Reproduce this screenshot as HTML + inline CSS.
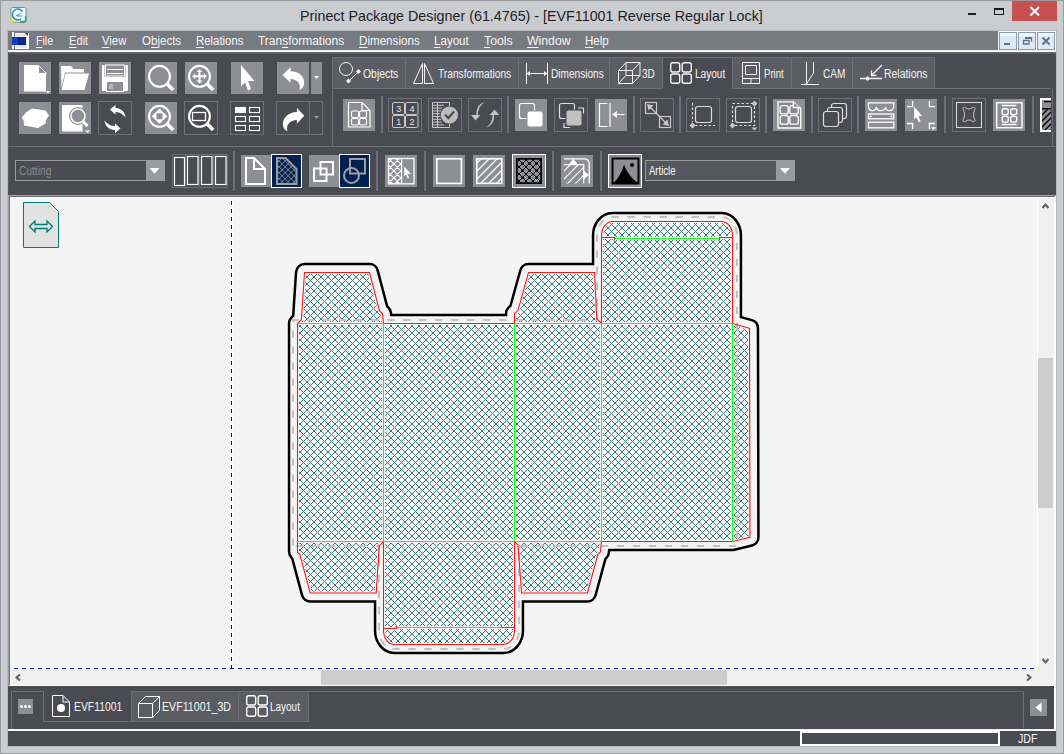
<!DOCTYPE html>
<html><head><meta charset="utf-8">
<style>
*{margin:0;padding:0;box-sizing:border-box}
html,body{width:1064px;height:754px;overflow:hidden;background:#cbccd0;font-family:"Liberation Sans",sans-serif}
.a{position:absolute}
.t{position:absolute;white-space:nowrap;font-size:12px;line-height:14px;color:#f6f6f6}
.u{text-decoration:underline;text-underline-offset:2px}
</style></head><body>
<svg class="a" style="left:0;top:0" width="1064" height="754" viewBox="0 0 1064 754">
<rect x="0" y="0" width="1064" height="754" fill="#cbccd0"/>
<rect x="0.5" y="0.5" width="1063" height="753" fill="none" stroke="#9a9ba0"/>
<rect x="7" y="30" width="1050" height="717" fill="#b8b9bd"/>
<!-- menubar -->
<rect x="8" y="31" width="1048" height="19" fill="#787a82"/>
<rect x="8" y="50" width="1048" height="2" fill="#f4f4f4"/>
<rect x="8" y="52" width="1048" height="143" fill="#4a4a52"/>
<rect x="8" y="52" width="1048" height="1.5" fill="#6a6a6c"/>
<rect x="8" y="52" width="1" height="143" fill="#5a5a5c"/>
<!-- canvas widget borders -->
<rect x="8" y="195" width="1048" height="491" fill="#a3a3a3"/>
<rect x="9" y="196" width="1047" height="490" fill="#ffffff"/>
<rect x="9" y="196" width="1046" height="489" fill="#696969"/>
<rect x="10" y="197" width="1045" height="488" fill="#ffffff"/>
<rect x="11" y="198" width="1026" height="472" fill="#f4f4f4"/>
<rect x="1038" y="198" width="16" height="487" fill="#f0f0f0"/>
<rect x="11" y="670" width="1043" height="15" fill="#f0f0f0"/>
<rect x="1038" y="358" width="15" height="150" fill="#cdcdcd"/>
<rect x="321" y="670" width="406" height="15" fill="#cdcdcd"/>
<g fill="none" stroke="#606060" stroke-width="2">
<path d="M1042.5 208 L1045.5 204.5 L1048.5 208"/>
<path d="M1042.5 659 L1045.5 662.5 L1048.5 659"/>
<path d="M20 674.5 L16.5 677.5 L20 680.5"/>
<path d="M1027 674.5 L1030.5 677.5 L1027 680.5"/>
</g>
<!-- bottom panel -->
<rect x="8" y="686" width="1048" height="43" fill="#4a4a52"/>
<rect x="8" y="729" width="1048" height="2" fill="#f4f4f4"/>
<rect x="8" y="731" width="1048" height="15" fill="#4a4a52"/>
<path d="M11.5 729 V691.5 H43.5 V721.5 H131.5 M308.5 691.5 H1023.5 V728.5" fill="none" stroke="#6e6e76"/>
<rect x="1054" y="686" width="2" height="45" fill="#fff"/>
<rect x="131.5" y="691.5" width="107" height="30" fill="#5c5c64" stroke="#6e6e76"/>
<rect x="238.5" y="691.5" width="70" height="30" fill="#5c5c64" stroke="#6e6e76"/>
<rect x="18" y="699" width="15" height="15" fill="#8e8f95"/>
<circle cx="21.5" cy="706.5" r="1.5" fill="#fff"/><circle cx="25.5" cy="706.5" r="1.5" fill="#fff"/><circle cx="29.5" cy="706.5" r="1.5" fill="#fff"/>
<path d="M52.5 695.5 H63 L69.5 702 V716.5 H52.5 Z M63 695.5 V702 H69.5" fill="none" stroke="#fff" stroke-width="1"/>
<circle cx="61" cy="708" r="4" fill="#fff"/>
<g fill="none" stroke="#fff" stroke-width="1">
<path d="M138.5 703.5 H152.5 V717.5 H138.5 Z M138.5 703.5 L145.5 696.5 H159.5 V710.5 L152.5 717.5 M152.5 703.5 L159.5 696.5"/>
<g stroke-width="1.4"><rect x="246.7" y="695.7" width="9" height="9.3" rx="2"/><rect x="258.2" y="695.7" width="9.1" height="9.3" rx="2"/>
<rect x="246.7" y="707" width="9" height="9.2" rx="2"/><rect x="258.2" y="707" width="9.1" height="9.2" rx="2"/></g>
</g>
<rect x="1030" y="699" width="17" height="17" fill="#8e8f95"/>
<path d="M1041.5 702.5 V712.5 L1035.5 707.5 Z" fill="#fff"/>
<!-- status -->
<rect x="801" y="732" width="198" height="13" fill="#4a4a52" stroke="#fff" stroke-width="2"/>
</svg>
<svg class="a" style="left:0;top:0" width="1064" height="754" viewBox="0 0 1064 754">
<!-- title bar icons -->
<rect x="11" y="7.5" width="15" height="15" rx="1.5" fill="#ffffff" stroke="#5a8fb8" stroke-width="1"/>
<path d="M11.5 14 V21.5 H19" stroke="#f0e030" stroke-width="2" fill="none"/>
<path d="M20 21.5 H25.5 V16" stroke="#30b040" stroke-width="1.5" fill="none"/>
<path d="M22.5 11.5 A5.5 5.5 0 1 0 21 19" stroke="#1e90e0" stroke-width="1.6" fill="none"/>
<path d="M16 16 L21 13 M17 16 H22.5" stroke="#1e90e0" stroke-width="1" fill="none"/>
<rect x="968" y="13" width="8" height="2" fill="#1a1a1a"/>
<rect x="994.5" y="8.5" width="9" height="6" fill="none" stroke="#1a1a1a" stroke-width="1"/>
<rect x="994" y="8" width="10" height="2" fill="#1a1a1a"/>
<rect x="1012" y="1" width="45" height="20" fill="#c75050"/>
<path d="M1030.5 7 L1039 15.5 M1039 7 L1030.5 15.5" stroke="#ffffff" stroke-width="2"/>
<!-- menu icon -->
<rect x="12" y="32" width="2" height="17" fill="#f0f0f0"/>
<rect x="15.5" y="33.5" width="12" height="15" fill="#e8e8e8" stroke="#ffffff" stroke-width="1"/>
<rect x="12" y="37" width="14" height="8" fill="#0a2a90"/>
<rect x="12" y="37" width="6" height="8" fill="#1040c0"/>
<path d="M25 33 L29 37 V33 Z" fill="#303030"/>
<rect x="28" y="33" width="1" height="16" fill="#ffffff"/>
<!-- MDI buttons -->
<rect x="998" y="31" width="58" height="19" fill="#fafafa"/>
<g fill="#dde9f6" stroke="#8a9bb0" stroke-width="1">
<rect x="999.5" y="32.5" width="17" height="17"/>
<rect x="1018.5" y="32.5" width="17" height="17"/>
<rect x="1037.5" y="32.5" width="17" height="17"/>
</g>
<g fill="#eef5fc"><rect x="1000" y="33" width="16" height="3"/><rect x="1019" y="33" width="16" height="3"/><rect x="1038" y="33" width="16" height="3"/></g>
<rect x="1004" y="43" width="6" height="2" fill="#637282"/>
<path d="M1023.5 40.5 h5.5 v3.5 h-5.5 z" fill="none" stroke="#637282" stroke-width="1.3"/>
<path d="M1025.5 37.7 h6 v4" fill="none" stroke="#637282" stroke-width="1.3"/>
<rect x="1025" y="37" width="7" height="2" fill="#637282"/>
<path d="M1042.5 37.5 L1049.5 44.5 M1049.5 37.5 L1042.5 44.5" stroke="#637282" stroke-width="2"/>
</svg>
<svg class="a" style="left:0;top:0" width="1064" height="754" viewBox="0 0 1064 754">
<g fill="#8e8f95">
<rect x="19" y="62" width="32" height="32"/><rect x="59" y="62" width="32" height="32"/><rect x="99" y="62" width="32" height="32"/>
<rect x="145" y="62" width="32" height="32"/><rect x="185" y="62" width="32" height="32"/><rect x="231" y="62" width="32" height="32"/>
<rect x="277" y="62" width="32" height="32"/><rect x="311" y="62" width="11" height="32"/>
<rect x="19" y="102" width="32" height="32"/><rect x="59" y="102" width="32" height="32"/><rect x="145" y="102" width="32" height="32"/>
</g>
<g fill="none" stroke="#6f7077" stroke-width="1">
<rect x="98.5" y="101.5" width="33" height="33"/><rect x="184.5" y="101.5" width="33" height="33"/><rect x="230.5" y="101.5" width="33" height="33"/>
<rect x="276.5" y="101.5" width="33" height="33"/><rect x="309.5" y="101.5" width="13" height="33"/>
</g>
<!-- new doc -->
<path d="M24 65 H38 V73 H46 V91.5 H24 Z" fill="#fff"/>
<path d="M38.5 65.5 V73.5 H46.5 Z" fill="#8e8f95" stroke="#fff" stroke-width="1"/>
<path d="M45.5 91 H50.5 L48 93.5 Z" fill="#fff"/>
<!-- open folder -->
<path d="M61 66 H71 L73.5 69 H84 V72.5 H65 L61.5 88 Z" fill="#fff"/>
<path d="M65.5 73.5 H89 L84.5 90 H61.5 Z" fill="#fff"/>
<!-- save -->
<path d="M102 66 Q102 65 103 65 H127 Q128 65 128 66 V90 Q128 91 127 91 H103 Q102 91 102 90 Z" fill="#fff"/>
<rect x="104.5" y="65" width="21" height="12" fill="#8e8f95"/>
<rect x="105.5" y="65" width="19" height="11" fill="none" stroke="#fff" stroke-width="1"/>
<path d="M107 69.5 H123 M107 73.5 H123" stroke="#fff" stroke-width="1"/>
<rect x="106.5" y="81.5" width="17" height="10" fill="#8e8f95" stroke="#fff" stroke-width="1"/>
<rect x="109" y="84" width="4" height="5" fill="#fff" opacity="0.35"/>
<!-- zoom -->
<g fill="none" stroke="#fff">
<circle cx="159.5" cy="76.3" r="10.4" stroke-width="2.1"/>
<path d="M166.8 83.6 L173.2 90" stroke-width="3.6"/>
<circle cx="199.5" cy="76.3" r="10.4" stroke-width="2.1"/>
<path d="M206.8 83.6 L213.2 90" stroke-width="3.6"/>
</g>
<path d="M199.5 69 L202.5 72 H200.5 V75.3 H203.8 V73.3 L206.8 76.3 L203.8 79.3 V77.3 H200.5 V80.6 H202.5 L199.5 83.6 L196.5 80.6 H198.5 V77.3 H195.2 V79.3 L192.2 76.3 L195.2 73.3 V75.3 H198.5 V72 H196.5 Z" fill="#fff"/>
<!-- arrow cursor -->
<path d="M241 65 L254.5 81 L248 81 L251 89 L248 90.5 L245 82.5 L241 86.5 Z" fill="#fff"/>
<!-- undo -->
<path d="M282.6 75 L290.6 67 V71.3 C299.5 71.3 305.5 77.5 304 84.5 C303.3 87.5 301.5 89.3 299.5 90 C301.3 84 297.5 79 290.6 79 V83 Z" fill="#fff"/>
<path d="M314 76 H319 L316.5 79 Z" fill="#fff"/>
<!-- row2: box -->
<path d="M21.5 118 L26.5 112 L32 108.5 L45.5 110.5 L49 115.5 L46 120 L45.5 123.5 L38 128 L24 125.5 L23.5 120 Z" fill="#fff"/>
<!-- doc+magnifier -->
<path d="M62 105 H82.5 V131.5 H62 Z" fill="#fff"/>
<circle cx="78" cy="116" r="9" fill="#8e8f95"/>
<circle cx="78" cy="116" r="7" fill="#8e8f95" stroke="#fff" stroke-width="1.5"/>
<path d="M83 121.5 L87.5 126" stroke="#fff" stroke-width="3"/>
<path d="M85 130.5 H90 L87.5 133 Z" fill="#fff"/>
<!-- rotate arrows -->
<path d="M110 109.5 L115.5 105 V108 C121 108 125 112 125.5 117.5 C123 114 119.5 112 115.5 112 V114.5 Z" fill="#fff"/>
<path d="M120.5 128.5 L115 133 V130 C109 130 105 126 104.5 120.5 C107 124 110.5 126 115 126 V123.5 Z" fill="#fff"/>
<!-- zoom fit -->
<g fill="none" stroke="#fff">
<circle cx="159.5" cy="116.3" r="10.4" stroke-width="2.1"/>
<path d="M166.8 123.6 L173.2 130" stroke-width="3.6"/>
<circle cx="199.5" cy="116.3" r="10.4" stroke-width="2.1"/>
<path d="M206.8 123.6 L213.2 130" stroke-width="3.6"/>
<rect x="192.5" y="112.5" width="13" height="8" stroke-width="1.3"/>
</g>
<path d="M159.5 108.5 L167.3 116.3 L159.5 124.1 L151.7 116.3 Z" fill="#fff"/>
<rect x="156.5" y="113.3" width="6" height="6" fill="#8e8f95"/>
<!-- grid -->
<g fill="none" stroke="#fff" stroke-width="1.1">
<rect x="235.5" y="107.5" width="10" height="5" fill="#fff"/><rect x="249.5" y="107.5" width="10" height="5"/>
<rect x="235.5" y="116.5" width="10" height="5"/><rect x="249.5" y="116.5" width="10" height="5"/>
<rect x="235.5" y="125.5" width="10" height="5"/><rect x="249.5" y="125.5" width="10" height="5"/>
</g>
<!-- redo -->
<path d="M304.3 115.8 L296.9 107.8 V112 C288 112 282 118.5 283 125.5 C283.5 128.5 285.3 130.5 287.5 131.2 C285.7 125.5 289.5 120 296.9 120 V123.5 Z" fill="#fff"/>
<path d="M314 116 H319 L316.5 119 Z" fill="#9a9aa0"/>
</svg>
<svg class="a" style="left:0;top:0" width="1064" height="754" viewBox="0 0 1064 754">
<!-- tab strip -->
<g stroke="#6e6e76" stroke-width="1">
<rect x="332.5" y="57.5" width="73" height="31" fill="#5c5c64"/>
<rect x="405.5" y="57.5" width="113" height="31" fill="#5c5c64"/>
<rect x="518.5" y="57.5" width="91" height="31" fill="#5c5c64"/>
<rect x="609.5" y="57.5" width="53" height="31" fill="#5c5c64"/>
<rect x="732.5" y="57.5" width="59" height="31" fill="#5c5c64"/>
<rect x="791.5" y="57.5" width="61" height="31" fill="#5c5c64"/>
<rect x="852.5" y="57.5" width="82" height="31" fill="#5c5c64"/>
<path d="M662.5 88.5 V57.5 H732.5 V88.5" fill="#4a4a52"/>
<path d="M332.5 88.5 V146 M934.5 88.5 H1052.5 V146" fill="none"/>
</g>
<path d="M8 146.5 H1056" stroke="#6e6e76" stroke-width="1"/>
<!-- tab icons -->
<g fill="none" stroke="#f4f4f4" stroke-width="1">
<circle cx="346" cy="69" r="6.5"/>
<path d="M349 81 L358.5 71.5"/>
<path d="M413.5 83.5 L422.5 63.5 V83.5 Z M424.5 63.5 V83.5 H433.5 Z"/>
<path d="M526.5 63 V84 M547.5 63 V84 M529 73.5 H545"/>
<path d="M618.5 70.5 H632.5 V83.5 H618.5 Z M618.5 70.5 L626 62.5 H640 V75.5 L632.5 83.5 M632.5 70.5 L640 62.5 M626 62.5 V75.5 H640 M618.5 83.5 L626 75.5"/>
<g stroke-width="1.4"><rect x="670.7" y="62.7" width="9" height="9.3" rx="2"/><rect x="682.2" y="62.7" width="9.1" height="9.3" rx="2"/>
<rect x="670.7" y="74" width="9" height="9.2" rx="2"/><rect x="682.2" y="74" width="9.1" height="9.2" rx="2"/></g>
<path d="M742.5 62.5 H759.5 V83.5 H742.5 Z M745.5 65.5 H756.5 V74.5 H745.5 Z M742.5 78.5 H759.5 M751 78.5 V83.5"/>
<path d="M806.5 62 V84 M813.5 62 V73 L806.5 84 M801 84.5 H819"/>
<path d="M860 78.5 H882 M882 65 L871.5 75.5 M871.5 70.5 V75.5 H876.5" stroke-width="1.3"/>
</g>
<path d="M526.5 73.5 L530 71 V76 Z M547.5 73.5 L544 71 V76 Z" fill="#f4f4f4"/>
<path d="M346 70 " />
<path d="M348.5 78.5 L351 81 L348.5 83.5 L346 81 Z M358.5 69 L361 71.5 L358.5 74 L356 71.5 Z M867.5 76 L870 78.5 L867.5 81 L865 78.5 Z" fill="#f4f4f4"/>
<!-- row 2 panel buttons -->
<g fill="#8e8f95">
<rect x="343" y="99" width="32" height="32"/><rect x="515" y="99" width="32" height="32"/><rect x="595" y="99" width="32" height="32"/>
<rect x="773" y="99" width="32" height="32"/><rect x="865" y="99" width="32" height="32"/><rect x="905" y="99" width="32" height="32"/>
<rect x="993" y="99" width="32" height="32"/>
</g>
<g fill="none" stroke="#6f7077" stroke-width="1">
<rect x="388.5" y="98.5" width="33" height="33"/><rect x="428.5" y="98.5" width="33" height="33"/><rect x="468.5" y="98.5" width="33" height="33"/>
<rect x="554.5" y="98.5" width="33" height="33"/><rect x="640.5" y="98.5" width="33" height="33"/><rect x="686.5" y="98.5" width="33" height="33"/>
<rect x="726.5" y="98.5" width="33" height="33"/><rect x="818.5" y="98.5" width="33" height="33"/><rect x="952.5" y="98.5" width="33" height="33"/>
</g>
<g fill="#6e6e78">
<rect x="381" y="96" width="2" height="37"/><rect x="507" y="96" width="2" height="37"/><rect x="633" y="96" width="2" height="37"/>
<rect x="679" y="96" width="2" height="37"/><rect x="765" y="96" width="2" height="37"/><rect x="811" y="96" width="2" height="37"/>
<rect x="857" y="96" width="2" height="37"/><rect x="944" y="96" width="2" height="37"/><rect x="1032" y="96" width="2" height="37"/>
</g>
<!-- icons row 2 panel -->
<g fill="none" stroke="#fff" stroke-width="1.2">
<path d="M348.5 102.5 H362 L370 110.5 V127 H348.5 Z M362 102.5 V110.5 H370"/>
<rect x="351.5" y="111" width="7" height="6.5" rx="1.5"/><rect x="359.5" y="111" width="7" height="6.5" rx="1.5"/>
<rect x="351.5" y="118.5" width="7" height="6.5" rx="1.5"/><rect x="359.5" y="118.5" width="7" height="6.5" rx="1.5"/>
</g>
<g fill="none" stroke="#c8c8c8" stroke-width="1">
<rect x="392.5" y="102.5" width="12" height="12" rx="1.5"/><rect x="405.5" y="102.5" width="12.5" height="12" rx="1.5"/>
<rect x="392.5" y="115.5" width="12" height="12" rx="1.5"/><rect x="405.5" y="115.5" width="12.5" height="12" rx="1.5"/>
<path d="M432.5 102.5 H449.5 V106 M432.5 102.5 V127.5 H449.5 V124 M432.5 105.3 H444 M432.5 108.1 H442 M432.5 110.9 H441 M432.5 113.7 H440.5 M432.5 116.5 H440.5 M432.5 119.3 H441 M432.5 122.1 H442 M432.5 124.9 H444 M437.5 102.5 V127.5"/>
</g>
<g font-family="Liberation Sans" font-size="9" fill="#e4e4e4" text-anchor="middle">
<text x="398.8" y="112">3</text><text x="412" y="112">4</text><text x="398.8" y="125">1</text><text x="412" y="125">2</text>
</g>
<circle cx="449.4" cy="115" r="8.6" fill="#bebebe"/>
<path d="M445 114.5 L448.3 118 L454 111.5" stroke="#4a4a52" stroke-width="2.2" fill="none"/>
<g fill="#c4c4c4">
<path d="M485 102.3 C479 103.5 476 108 476.5 115 H471 L475.7 120.5 L480.2 115 H477.8 C478 109 480.5 104.5 485 102.3 Z"/>
<path d="M485.5 127.5 C491.5 126.3 494.5 121.8 494 115 H499.3 L494.7 109.8 L489.5 115 H492.5 C492.5 121 490 125.5 485.5 127.5 Z"/>
</g>
<g fill="none" stroke="#fff" stroke-width="1.2">
<rect x="519.5" y="103.5" width="15" height="15" rx="2"/>
</g>
<rect x="527" y="111" width="16" height="16" rx="2.5" fill="#fff" stroke="#8e8f95" stroke-width="1"/>
<g fill="none" stroke="#e0e0e0" stroke-width="1.2">
<rect x="559.5" y="103.5" width="15" height="15" rx="2"/>
<path d="M578 108 H583.5 V113.5 M564 123 V127.5 H570"/>
</g>
<rect x="566" y="110" width="16" height="16" rx="2.5" fill="#c0c0c0" stroke="#4a4a52" stroke-width="1"/>
<g fill="none" stroke="#fff" stroke-width="1.2">
<path d="M607.5 103.5 H599.5 V126.5 H607.5 M610 103 V127 M624.5 114.5 H615"/>
</g>
<path d="M612 114.5 L617 111 V118 Z" fill="#fff"/>
<g fill="none" stroke="#c8c8c8" stroke-width="1.2">
<rect x="645.5" y="102.5" width="11" height="11"/><rect x="659.5" y="116.5" width="11" height="11"/>
<path d="M648.5 105.5 L667.5 124.5"/>
</g>
<path d="M647 104 L653.5 105.5 L648.5 110.5 Z M669 126 L662.5 124.5 L667.5 119.5 Z" fill="#c8c8c8"/>
<g fill="none" stroke="#dcdcdc" stroke-width="1.2">
<rect x="695.5" y="106.5" width="16" height="16" rx="2.5"/>
<rect x="735.5" y="106.5" width="16" height="16" rx="2.5"/>
<path d="M692.5 103 V122 M695 125.5 H715" stroke-dasharray="2.5 2"/>
<path d="M732.5 106 V122 M735 125.5 H754.5 V106 M732.5 103.5 H752" stroke-dasharray="2.5 2"/>
</g>
<path d="M692.5 122.5 L695.5 125.5 L692.5 128.5 L689.5 125.5 Z M732.5 122.5 L735.5 125.5 L732.5 128.5 L729.5 125.5 Z M754.5 100.5 L757.5 103.5 L754.5 106.5 L751.5 103.5 Z" fill="#c8c8c8"/>
<path d="M751.5 127.5 H757.5 L754.5 130.5 Z" fill="#c8c8c8"/>
<path d="M778 101.8 H793.4 L800.7 108.6 V128 H778 Z" fill="#88898f" stroke="#fff" stroke-width="1.3"/>
<path d="M793.4 101.8 V108 H800.7" fill="none" stroke="#fff" stroke-width="1.3"/>
<g fill="#88898f" stroke="#fff" stroke-width="1.3">
<rect x="780.2" y="105.6" width="8" height="8.3" rx="2"/><rect x="789.8" y="105.6" width="8.5" height="8.3" rx="2"/>
<rect x="780.2" y="115.6" width="8" height="8.6" rx="2"/><rect x="789.8" y="115.6" width="8.5" height="8.6" rx="2"/>
</g>
<path d="M793.4 102.5 V107.5 H800" fill="#8e8f95" stroke="#fff" stroke-width="1.3"/>
<g fill="#4a4a52" stroke="#dcdcdc" stroke-width="1.2">
<rect x="831.5" y="103.5" width="15" height="15" rx="2.5"/>
<rect x="827.5" y="107.5" width="15" height="15" rx="2.5"/>
<rect x="823.5" y="111.5" width="15" height="15" rx="2.5"/>
</g>
<g fill="none" stroke="#fff" stroke-width="1.3">
<path d="M868.5 102.8 H893.8 V106 C893.8 109 891.5 110.7 889.3 110.7 C887.2 110.7 885.8 109.2 885.6 107.2 C885 109.6 883 110.7 881 110.7 C879 110.7 877 109.6 876.3 107.2 C876 109.2 874.6 110.7 872.5 110.7 C870.2 110.7 868.5 109 868.5 106 Z"/>
<rect x="868.5" y="114" width="25.3" height="4.8"/>
<rect x="868.5" y="122.2" width="25.3" height="5.6"/>
<path d="M907 106.6 H912.6 V101 M929.4 101 V106.6 H935 M907 123.5 H912.6 V129 M935 123.5 H929.4 V129"/>
</g>
<circle cx="870.8" cy="116.4" r="0.9" fill="#fff"/><circle cx="891.5" cy="116.4" r="0.9" fill="#fff"/>
<path d="M914.2 106.6 L922 116 L918.3 116.2 L920.6 121.3 L918.8 122.2 L916.6 117.2 L914.2 119.3 Z" fill="#fff"/>
<path d="M930.9 127.2 H936 L933.4 130.2 Z" fill="#fff"/>
<rect x="956.5" y="102.5" width="25" height="25" fill="none" stroke="#d4d4d4" stroke-width="1.1"/>
<path d="M963.5 110 C962 107.5 964 106.5 966 108 C968 109.3 970 109.3 972 108 C974 106.5 976 107.5 974.5 110 C973.3 112 973.3 117 974.5 119 C976 121.5 974 122.5 972 121 C970 119.7 968 119.7 966 121 C964 122.5 962 121.5 963.5 119 C964.7 117 964.7 112 963.5 110 Z" fill="none" stroke="#c4c4c4" stroke-width="1"/>
<g fill="none" stroke="#fff" stroke-width="1.4">
<rect x="996.7" y="102.7" width="25.3" height="25"/>
<path d="M1002 105.5 H1016.5 M1002 124.5 H1016.5"/>
<rect x="1002.2" y="108.8" width="6" height="5.8" rx="1.8"/><rect x="1010.7" y="108.8" width="6" height="5.8" rx="1.8"/>
<rect x="1002.2" y="116.3" width="6" height="5.8" rx="1.8"/><rect x="1010.7" y="116.3" width="6" height="5.8" rx="1.8"/>
</g>
<rect x="1040" y="98" width="11" height="34" fill="#fff"/>
<rect x="1042" y="100" width="9" height="30" fill="#8e8f95"/>
<rect x="1044" y="101" width="7" height="1.3" fill="#000"/>
<rect x="1042" y="108" width="9" height="1.5" fill="#000"/>
<clipPath id="c5"><rect x="1042" y="109.5" width="11" height="20.5"/></clipPath>
<g clip-path="url(#c5)"><path d="M1040 117 L1050 107 M1040 123 L1054 109 M1040 129 L1056 113 M1044 131 L1056 119 M1050 131 L1056 125" stroke="#000" stroke-width="1.3"/></g>
<rect x="1051" y="88" width="5" height="58" fill="#4a4a52"/>
<path d="M1052.5 88.5 V146" stroke="#6e6e76"/>
</svg>
<svg class="a" style="left:0;top:0" width="1064" height="754" viewBox="0 0 1064 754">
<defs>
<pattern id="xh" patternUnits="userSpaceOnUse" width="4.2" height="4.2" patternTransform="rotate(45)">
<rect width="4.2" height="4.2" fill="none"/><path d="M0 0 V4.2 M0 0 H4.2" stroke="#9c9ca0" stroke-width="1.2"/>
</pattern>
<pattern id="xb" patternUnits="userSpaceOnUse" width="5" height="5" patternTransform="rotate(45)">
<path d="M0 0 V5 M0 0 H5" stroke="#000" stroke-width="1.6"/>
</pattern>
<pattern id="hs" patternUnits="userSpaceOnUse" width="5" height="5" patternTransform="rotate(-45)">
<path d="M0 0 H5" stroke="#fff" stroke-width="1.2"/>
</pattern>
</defs>
<!-- cutting combo -->
<rect x="15.5" y="160.5" width="149" height="20" fill="#4a4a52" stroke="#9a9ba0" stroke-width="1"/>
<rect x="146" y="160" width="19" height="21" fill="#9a9ba0"/>
<path d="M149.5 168 H159.5 L154.5 173.8 Z" fill="#fff"/>
<!-- 4 columns -->
<rect x="172.5" y="154.5" width="55" height="33" fill="none" stroke="#6e6f76" stroke-width="1"/>
<path d="M185.5 155 V187 M199.5 155 V187 M213.5 155 V187" stroke="#6e6f76" stroke-width="1"/>
<g fill="none" stroke="#fff" stroke-width="1.2">
<rect x="174.5" y="157.5" width="10" height="28"/><rect x="187.5" y="156.5" width="10.5" height="28"/>
<rect x="201.5" y="156.5" width="10.5" height="28"/><rect x="215.5" y="156.5" width="10.5" height="28"/>
</g>
<g fill="#6e6e78">
<rect x="233" y="151" width="2" height="40"/><rect x="376" y="151" width="2" height="40"/><rect x="424" y="151" width="2" height="40"/>
<rect x="552" y="151" width="2" height="40"/><rect x="600" y="151" width="2" height="40"/>
</g>
<g fill="#8e8f95">
<rect x="241" y="155" width="30" height="32"/><rect x="309" y="155" width="30" height="32"/><rect x="385" y="155" width="32" height="32"/>
<rect x="433" y="155" width="32" height="32"/><rect x="473" y="155" width="32" height="32"/><rect x="561" y="155" width="32" height="32"/>
</g>
<rect x="271.5" y="154.5" width="30" height="33" fill="#002050" stroke="#fff" stroke-width="1"/>
<rect x="339.5" y="154.5" width="30" height="33" fill="#002050" stroke="#fff" stroke-width="1"/>
<rect x="512.5" y="154.5" width="33" height="33" fill="#8e8f95" stroke="#fff" stroke-width="1"/>
<rect x="608.5" y="154.5" width="33" height="33" fill="#8e8f95" stroke="#fff" stroke-width="1"/>
<!-- page icons -->
<path d="M246 158 H254 L265 169 V184 H246 Z M254 158 V169 H265" fill="none" stroke="#fff" stroke-width="2"/>
<path d="M277 158 H285.5 L296.5 169 V184 H277 Z" fill="url(#xh)" stroke="#9c9ca0" stroke-width="2"/>
<g fill="none" stroke="#fff" stroke-width="2">
<rect x="314" y="168.5" width="12.5" height="12.5"/><rect x="320.5" y="162" width="12.5" height="12.5"/>
</g>
<g fill="none" stroke="#9c9ca0" stroke-width="2">
<rect x="350" y="159" width="15" height="14.5"/><circle cx="351.5" cy="175.5" r="7.5"/>
</g>
<!-- crosshatch select btn -->
<clipPath id="c4"><rect x="388.5" y="158.5" width="13" height="25"/></clipPath>
<g clip-path="url(#c4)" stroke="#fff" stroke-width="1.1" fill="none"><path d="M352 150 L392 190 M379.79999999999995 150 L339.79999999999995 190 M359 150 L399 190 M386.79999999999995 150 L346.79999999999995 190 M366 150 L406 190 M393.79999999999995 150 L353.79999999999995 190 M373 150 L413 190 M400.79999999999995 150 L360.79999999999995 190 M380 150 L420 190 M407.79999999999995 150 L367.79999999999995 190 M387 150 L427 190 M414.79999999999995 150 L374.79999999999995 190 M394 150 L434 190 M421.79999999999995 150 L381.79999999999995 190 M401 150 L441 190 M428.79999999999995 150 L388.79999999999995 190 M408 150 L448 190 M435.79999999999995 150 L395.79999999999995 190"/></g>
<circle cx="393.9" cy="163.9" r="1.2" fill="#fff"/><circle cx="393.9" cy="170.9" r="1.2" fill="#fff"/><circle cx="393.9" cy="177.9" r="1.2" fill="#fff"/>
<rect x="388.5" y="158.5" width="25.5" height="25.3" fill="none" stroke="#fff" stroke-width="1.3"/>
<path d="M401.6 158.5 V183.8" stroke="#fff" stroke-width="1.2"/>
<path d="M404.2 166.4 L410.9 173.7 L407.3 173.9 L409.2 177.7 L407.8 178.4 L405.9 174.6 L404.2 176.2 Z" fill="#fff"/>
<!-- fill style btns -->
<rect x="436.8" y="158.8" width="24.6" height="24.6" fill="none" stroke="#fff" stroke-width="1.6"/>
<clipPath id="c1"><rect x="477" y="159" width="25" height="24.5"/></clipPath>
<g clip-path="url(#c1)" stroke="#fff" stroke-width="1.3">
<path d="M470 170 L484 156 M470 178 L492 156 M472 184 L500 156 M479 185 L508 156 M487 185 L508 164 M495 185 L508 172"/>
</g>
<rect x="476.8" y="158.8" width="25" height="24.5" fill="none" stroke="#fff" stroke-width="1.6"/>
<rect x="516" y="158" width="26" height="26" fill="#000"/>
<rect x="517.5" y="159.5" width="23" height="23" fill="#8e8f95"/>
<clipPath id="c2"><rect x="517" y="159" width="24" height="24"/></clipPath>
<g clip-path="url(#c2)" stroke="#000" stroke-width="1" fill="none"><path d="M479 155 L514 190 M496 155 L461 190 M486 155 L521 190 M503 155 L468 190 M493 155 L528 190 M510 155 L475 190 M500 155 L535 190 M517 155 L482 190 M507 155 L542 190 M524 155 L489 190 M514 155 L549 190 M531 155 L496 190 M521 155 L556 190 M538 155 L503 190 M528 155 L563 190 M545 155 L510 190 M535 155 L570 190 M552 155 L517 190 M542 155 L577 190 M559 155 L524 190 M549 155 L584 190 M566 155 L531 190"/></g>
<g fill="#000"><circle cx="522.5" cy="163.5" r="1.2"/><circle cx="522.5" cy="170.5" r="1.2"/><circle cx="522.5" cy="177.5" r="1.2"/><circle cx="529.5" cy="163.5" r="1.2"/><circle cx="529.5" cy="170.5" r="1.2"/><circle cx="529.5" cy="177.5" r="1.2"/><circle cx="536.5" cy="163.5" r="1.2"/><circle cx="536.5" cy="170.5" r="1.2"/><circle cx="536.5" cy="177.5" r="1.2"/></g>
<rect x="516.7" y="158.7" width="24.6" height="24.6" fill="none" stroke="#000" stroke-width="1.4"/>
<!-- offset btn -->
<clipPath id="c3"><path d="M564 165 H583 V183.5 H564 Z"/></clipPath>
<g clip-path="url(#c3)" stroke="#fff" stroke-width="1.2">
<path d="M560 175 L572 163 M560 183 L580 163 M564 187 L588 163 M572 187 L590 169 M580 187 L590 177"/>
</g>
<path d="M564 158.8 H584 Q589.2 158.8 589.2 164 V183.6 M564 164.6 H583.7 V183.6" stroke="#fff" stroke-width="1.3" fill="none"/>
<path d="M573.3 159 L577.5 164 H569 Z M589 175 L584 171 V179 Z" fill="#fff"/>
<!-- image btn -->
<rect x="612.5" y="158.5" width="26" height="25" fill="#8e8f95" stroke="#000" stroke-width="2"/>
<path d="M613.5 183 C618 179 622 172 624 164.5 C626.5 172 632 179 638 183 Z" fill="#000"/>
<circle cx="632" cy="165" r="2" fill="#000"/>
<!-- article combo -->
<rect x="645.5" y="160.5" width="149" height="20" fill="#56565e" stroke="#9a9ba0" stroke-width="1"/>
<rect x="776" y="160" width="19" height="21" fill="#9a9ba0"/>
<path d="M780 168 H790 L785 173.8 Z" fill="#fff"/>
</svg>
<svg class="a" style="left:0;top:0" width="1064" height="754" viewBox="0 0 1064 754">
<defs>
<clipPath id="cv"><rect x="10" y="198" width="1027" height="472"/></clipPath>
<pattern id="ht" patternUnits="userSpaceOnUse" x="5" y="3" width="7" height="7">
<path d="M0 0h2v2h-2z M2 2h1v1h-1z M3 3h1v1h-1z M4 4h1v1h-1z M5 5h1v1h-1z M6 6h1v1h-1z M6 2h1v1h-1z M5 3h1v1h-1z M3 5h1v1h-1z M2 6h1v1h-1z" fill="#387c7c" shape-rendering="crispEdges"/>
</pattern>
</defs>
<g clip-path="url(#cv)">
<path d="M231.5 201 V668" stroke="#fff" stroke-width="3" stroke-dasharray="6 2" stroke-dashoffset="1"/>
<path d="M14 668.5 H1034" stroke="#fff" stroke-width="3" stroke-dasharray="6 2" stroke-dashoffset="1"/>
<path d="M231.5 201 V668" stroke="#0000ff" stroke-width="1" stroke-dasharray="4 4"/>
<path d="M14 668.5 H1034" stroke="#0000ff" stroke-width="1" stroke-dasharray="4 4"/>
<path d="M297.5 323.5 L301.4 319.7 L304.5 272.5 L369.5 272.5 L379.6 310.9 L382.5 313.5 L383.5 323.5 L514.5 323.5 L514.5 313.6 L518 310.3 L528.5 272.5 L594.5 272.5 L596.8 318.7 L601.5 323.5 L601.5 235.5 A11 14 0 0 1 612.5 221.5 L721.5 221.5 A11 14 0 0 1 732.5 235.5 L732.5 323.5 L749.5 328.3 L750 537.3 L732.5 541.5 L601.5 541.5 L600.5 551.7 L597.9 554.4 L587.4 593 L521.6 593 L518 545 L514.5 541.5 L514.5 630.5 A11 14 0 0 1 503.5 644.5 L394.5 644.5 A11 14 0 0 1 383.5 630.5 L383.5 541.5 L379.2 545.9 L376.2 593 L310.2 593 L299.9 554.5 L297.5 551.8 Z" fill="none" stroke="#000" stroke-width="19.4" stroke-linejoin="round"/>
<path d="M297.5 323.5 L301.4 319.7 L304.5 272.5 L369.5 272.5 L379.6 310.9 L382.5 313.5 L383.5 323.5 L514.5 323.5 L514.5 313.6 L518 310.3 L528.5 272.5 L594.5 272.5 L596.8 318.7 L601.5 323.5 L601.5 235.5 A11 14 0 0 1 612.5 221.5 L721.5 221.5 A11 14 0 0 1 732.5 235.5 L732.5 323.5 L749.5 328.3 L750 537.3 L732.5 541.5 L601.5 541.5 L600.5 551.7 L597.9 554.4 L587.4 593 L521.6 593 L518 545 L514.5 541.5 L514.5 630.5 A11 14 0 0 1 503.5 644.5 L394.5 644.5 A11 14 0 0 1 383.5 630.5 L383.5 541.5 L379.2 545.9 L376.2 593 L310.2 593 L299.9 554.5 L297.5 551.8 Z" fill="none" stroke="#f4f4f4" stroke-width="14.4" stroke-linejoin="round"/>
<path d="M297.5 323.5 L301.4 319.7 L304.5 272.5 L369.5 272.5 L379.6 310.9 L382.5 313.5 L383.5 323.5 L514.5 323.5 L514.5 313.6 L518 310.3 L528.5 272.5 L594.5 272.5 L596.8 318.7 L601.5 323.5 L601.5 235.5 A11 14 0 0 1 612.5 221.5 L721.5 221.5 A11 14 0 0 1 732.5 235.5 L732.5 323.5 L749.5 328.3 L750 537.3 L732.5 541.5 L601.5 541.5 L600.5 551.7 L597.9 554.4 L587.4 593 L521.6 593 L518 545 L514.5 541.5 L514.5 630.5 A11 14 0 0 1 503.5 644.5 L394.5 644.5 A11 14 0 0 1 383.5 630.5 L383.5 541.5 L379.2 545.9 L376.2 593 L310.2 593 L299.9 554.5 L297.5 551.8 Z" fill="#f4f4f4"/>
<path d="M297.5 323.5 L301.4 319.7 L304.5 272.5 L369.5 272.5 L379.6 310.9 L382.5 313.5 L383.5 323.5 L514.5 323.5 L514.5 313.6 L518 310.3 L528.5 272.5 L594.5 272.5 L596.8 318.7 L601.5 323.5 L601.5 235.5 A11 14 0 0 1 612.5 221.5 L721.5 221.5 A11 14 0 0 1 732.5 235.5 L732.5 323.5 L749.5 328.3 L750 537.3 L732.5 541.5 L601.5 541.5 L600.5 551.7 L597.9 554.4 L587.4 593 L521.6 593 L518 545 L514.5 541.5 L514.5 630.5 A11 14 0 0 1 503.5 644.5 L394.5 644.5 A11 14 0 0 1 383.5 630.5 L383.5 541.5 L379.2 545.9 L376.2 593 L310.2 593 L299.9 554.5 L297.5 551.8 Z" fill="url(#ht)"/>
<path d="M297.5 323.5 L301.4 319.7 L304.5 272.5 L369.5 272.5 L379.6 310.9 L382.5 313.5 L383.5 323.5 L514.5 323.5 L514.5 313.6 L518 310.3 L528.5 272.5 L594.5 272.5 L596.8 318.7 L601.5 323.5 L601.5 235.5 A11 14 0 0 1 612.5 221.5 L721.5 221.5 A11 14 0 0 1 732.5 235.5 L732.5 323.5 L749.5 328.3 L750 537.3 L732.5 541.5 L601.5 541.5 L600.5 551.7 L597.9 554.4 L587.4 593 L521.6 593 L518 545 L514.5 541.5 L514.5 630.5 A11 14 0 0 1 503.5 644.5 L394.5 644.5 A11 14 0 0 1 383.5 630.5 L383.5 541.5 L379.2 545.9 L376.2 593 L310.2 593 L299.9 554.5 L297.5 551.8 Z M297.5 323.5 H383.5 M514.5 323.5 H601.5 M601.5 323.5 H732.5 M383.5 323.5 V541.5 M514.5 323.5 V541.5 M601.5 323.5 V541.5 M732.5 323.5 V541.5 M297.5 541.5 H601.5 M614.5 238.5 H719.5 M396.5 627.5 H501.5 M601.5 237.5 H614.5 V240.5 M732.5 237.5 H719.5 V240.5 M383.5 628.5 H396.5 V625.5 M514.5 627.5 H501.5 V624.5" fill="none" stroke="#f8f8f8" stroke-width="3"/>
<path d="M293 546 V320 H597 V235.5 A15.5 18.5 0 0 1 612.5 217 H721.5 A15.5 18.5 0 0 1 737 235.5 V546 H519 V630.5 A15.5 18.5 0 0 1 503.5 649 H394.5 A15.5 18.5 0 0 1 379 630.5 V546 H293 Z" fill="none" stroke="#c2c2c2" stroke-width="2" stroke-dasharray="7.5 8.5"/>
<path d="M297.5 323.5 L301.4 319.7 L304.5 272.5 L369.5 272.5 L379.6 310.9 L382.5 313.5 L383.5 323.5 L514.5 323.5 L514.5 313.6 L518 310.3 L528.5 272.5 L594.5 272.5 L596.8 318.7 L601.5 323.5 L601.5 235.5 A11 14 0 0 1 612.5 221.5 L721.5 221.5 A11 14 0 0 1 732.5 235.5 L732.5 323.5 L749.5 328.3 L750 537.3 L732.5 541.5 L601.5 541.5 L600.5 551.7 L597.9 554.4 L587.4 593 L521.6 593 L518 545 L514.5 541.5 L514.5 630.5 A11 14 0 0 1 503.5 644.5 L394.5 644.5 A11 14 0 0 1 383.5 630.5 L383.5 541.5 L379.2 545.9 L376.2 593 L310.2 593 L299.9 554.5 L297.5 551.8 Z" fill="none" stroke="#ff1414" stroke-width="1.1"/>
<path d="M601.5 237.5 H614.5 V240.5 M732.5 237.5 H719.5 V240.5 M383.5 628.5 H396.5 V625.5 M514.5 627.5 H501.5 V624.5" fill="none" stroke="#ff1414" stroke-width="1.1"/>
<path d="M297.5 323.5 H383.5 M514.5 323.5 H601.5 M601.5 323.5 H732.5 M383.5 323.5 V541.5 M514.5 323.5 V541.5 M601.5 323.5 V541.5 M732.5 323.5 V541.5 M297.5 541.5 H601.5 M614.5 238.5 H719.5 M396.5 627.5 H501.5" fill="none" stroke="#10ff10" stroke-width="1.1"/>
</g>
<!-- doc icon -->
<path d="M23.5 202.5 H49.5 L58.5 211.5 V247.5 H23.5 Z" fill="#e2e2e2" stroke="#007a7a" stroke-width="1"/>
<path d="M29.5 226.5 L35 221 V224.5 H47 V221 L52.5 226.5 L47 232 V228.5 H35 V232 Z" fill="none" stroke="#007a7a" stroke-width="1.3"/>
</svg><div class="t" style="left:300.0px;top:6.60px;font-size:15px;line-height:18px;color:#1e1e1e;transform:scaleX(0.9527);transform-origin:0 0">Prinect Package Designer (61.4765) - [EVF11001 Reverse Regular Lock]</div>
<div class="t" style="left:36.3px;top:33.54px;font-size:12px;line-height:14px;color:#f6f6f6;transform:scaleX(0.8800);transform-origin:0 0"><span style="text-decoration:underline;text-underline-offset:1.5px;text-decoration-thickness:1px">F</span>ile</div>
<div class="t" style="left:68.5px;top:33.54px;font-size:12px;line-height:14px;color:#f6f6f6;transform:scaleX(0.9286);transform-origin:0 0"><span style="text-decoration:underline;text-underline-offset:1.5px;text-decoration-thickness:1px">E</span>dit</div>
<div class="t" style="left:102.3px;top:33.54px;font-size:12px;line-height:14px;color:#f6f6f6;transform:scaleX(0.9423);transform-origin:0 0"><span style="text-decoration:underline;text-underline-offset:1.5px;text-decoration-thickness:1px">V</span>iew</div>
<div class="t" style="left:141.8px;top:33.54px;font-size:12px;line-height:14px;color:#f6f6f6;transform:scaleX(0.9610);transform-origin:0 0">O<span style="text-decoration:underline;text-underline-offset:1.5px;text-decoration-thickness:1px">b</span>jects</div>
<div class="t" style="left:195.5px;top:33.54px;font-size:12px;line-height:14px;color:#f6f6f6;transform:scaleX(0.9480);transform-origin:0 0"><span style="text-decoration:underline;text-underline-offset:1.5px;text-decoration-thickness:1px">R</span>elations</div>
<div class="t" style="left:257.9px;top:33.54px;font-size:12px;line-height:14px;color:#f6f6f6;transform:scaleX(1.0000);transform-origin:0 0">Tran<span style="text-decoration:underline;text-underline-offset:1.5px;text-decoration-thickness:1px">s</span>formations</div>
<div class="t" style="left:358.6px;top:33.54px;font-size:12px;line-height:14px;color:#f6f6f6;transform:scaleX(0.9683);transform-origin:0 0"><span style="text-decoration:underline;text-underline-offset:1.5px;text-decoration-thickness:1px">D</span>imensions</div>
<div class="t" style="left:434.1px;top:33.54px;font-size:12px;line-height:14px;color:#f6f6f6;transform:scaleX(0.9649);transform-origin:0 0"><span style="text-decoration:underline;text-underline-offset:1.5px;text-decoration-thickness:1px">L</span>ayout</div>
<div class="t" style="left:484.3px;top:33.54px;font-size:12px;line-height:14px;color:#f6f6f6;transform:scaleX(1.0250);transform-origin:0 0"><span style="text-decoration:underline;text-underline-offset:1.5px;text-decoration-thickness:1px">T</span>ools</div>
<div class="t" style="left:527.1px;top:33.54px;font-size:12px;line-height:14px;color:#f6f6f6;transform:scaleX(1.0209);transform-origin:0 0"><span style="text-decoration:underline;text-underline-offset:1.5px;text-decoration-thickness:1px">W</span>indow</div>
<div class="t" style="left:585.4px;top:33.54px;font-size:12px;line-height:14px;color:#f6f6f6;transform:scaleX(0.9640);transform-origin:0 0"><span style="text-decoration:underline;text-underline-offset:1.5px;text-decoration-thickness:1px">H</span>elp</div>
<div class="t" style="left:362.9px;top:66.74px;font-size:12px;line-height:14px;color:#f6f6f6;transform:scaleX(0.8683);transform-origin:0 0">Objects</div>
<div class="t" style="left:437.8px;top:66.74px;font-size:12px;line-height:14px;color:#f6f6f6;transform:scaleX(0.8488);transform-origin:0 0">Transformations</div>
<div class="t" style="left:550.6px;top:66.74px;font-size:12px;line-height:14px;color:#f6f6f6;transform:scaleX(0.8413);transform-origin:0 0">Dimensions</div>
<div class="t" style="left:642.2px;top:66.74px;font-size:12px;line-height:14px;color:#f6f6f6;transform:scaleX(0.8375);transform-origin:0 0">3D</div>
<div class="t" style="left:694.5px;top:66.74px;font-size:12px;line-height:14px;color:#f6f6f6;transform:scaleX(0.8378);transform-origin:0 0">Layout</div>
<div class="t" style="left:764.3px;top:66.74px;font-size:12px;line-height:14px;color:#f6f6f6;transform:scaleX(0.8000);transform-origin:0 0">Print</div>
<div class="t" style="left:822.8px;top:66.74px;font-size:12px;line-height:14px;color:#f6f6f6;transform:scaleX(0.8333);transform-origin:0 0">CAM</div>
<div class="t" style="left:884.2px;top:66.74px;font-size:12px;line-height:14px;color:#f6f6f6;transform:scaleX(0.8680);transform-origin:0 0">Relations</div>
<div class="t" style="left:18.9px;top:163.84px;font-size:12px;line-height:14px;color:#8c8c8c;transform:scaleX(0.8500);transform-origin:0 0">Cutting</div>
<div class="t" style="left:649.0px;top:163.64px;font-size:12px;line-height:14px;color:#f6f6f6;transform:scaleX(0.7941);transform-origin:0 0">Article</div>
<div class="t" style="left:74.4px;top:699.74px;font-size:12px;line-height:14px;color:#f6f6f6;transform:scaleX(0.8643);transform-origin:0 0">EVF11001</div>
<div class="t" style="left:162.4px;top:699.74px;font-size:12px;line-height:14px;color:#f6f6f6;transform:scaleX(0.8872);transform-origin:0 0">EVF11001_3D</div>
<div class="t" style="left:270.3px;top:699.74px;font-size:12px;line-height:14px;color:#f6f6f6;transform:scaleX(0.8297);transform-origin:0 0">Layout</div>
<div class="t" style="left:1017.6px;top:732.04px;font-size:12px;line-height:14px;color:#f6f6f6;transform:scaleX(0.8818);transform-origin:0 0">JDF</div></body></html>
